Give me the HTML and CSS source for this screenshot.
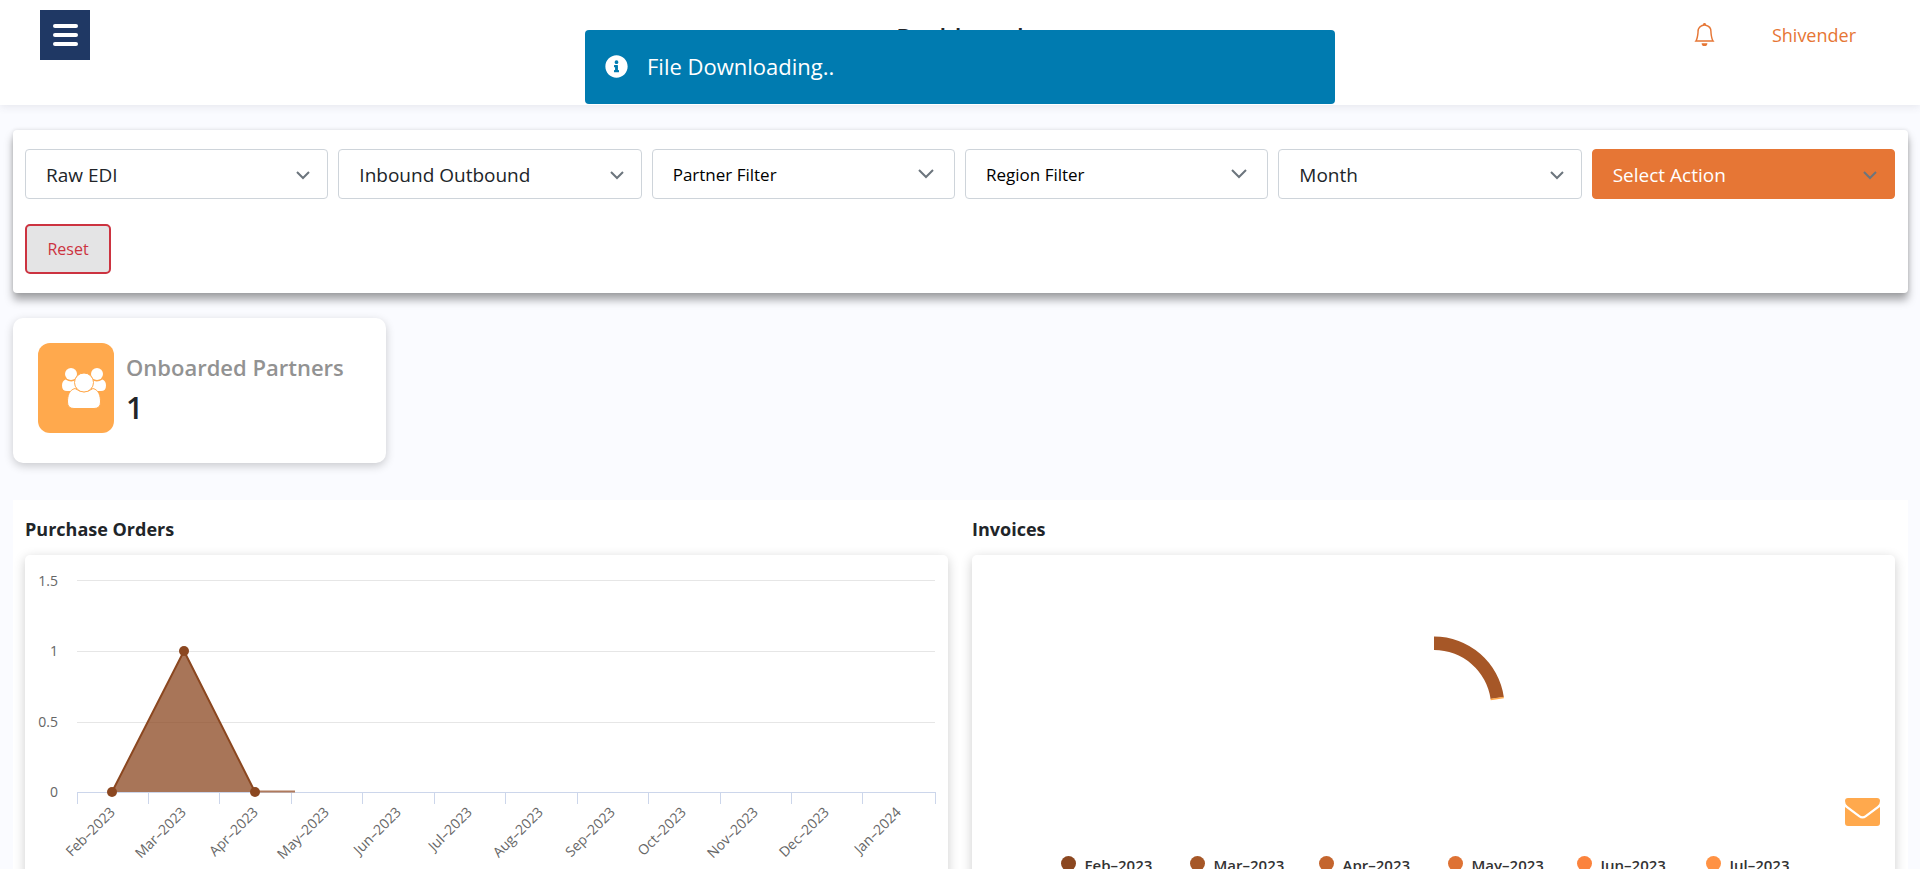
FILE: index.html
```html
<!DOCTYPE html>
<html lang="en">
<head>
<meta charset="utf-8">
<title>Dashboard</title>
<meta name="viewport" content="width=device-width, initial-scale=1">
<link rel="stylesheet" href="styles.css">
</head>
<body>
<header class="topbar">
  <button class="menu-btn" type="button" aria-label="Toggle menu"><span></span><span></span><span></span></button>
  <h1 class="topbar-title">Dashboard</h1>
  <div class="topbar-user">
    <button class="bell" type="button" aria-label="Notifications">
      <svg viewBox="0 0 16 16" width="23" height="23" fill="currentColor"><path d="M8 16a2 2 0 0 0 2-2H6a2 2 0 0 0 2 2zM8 1.918l-.797.161A4.002 4.002 0 0 0 4 6c0 .628-.134 2.197-.459 3.742-.16.767-.376 1.566-.663 2.258h10.244c-.287-.692-.502-1.49-.663-2.258C12.134 8.197 12 6.628 12 6a4.002 4.002 0 0 0-3.203-3.92L8 1.917zM14.22 12c.223.447.481.801.78 1H1c.299-.199.557-.553.78-1C2.68 10.2 3 6.88 3 6c0-2.42 1.72-4.44 4.005-4.901a1 1 0 1 1 1.99 0A5.002 5.002 0 0 1 13 6c0 .88.32 4.2 1.22 6z"/></svg>
    </button>
    <a class="user-link" href="#">Shivender</a>
  </div>
</header>

<div class="toast" role="status">
  <svg viewBox="0 0 512 512" width="23" height="23" fill="#fff" aria-hidden="true"><path d="M256 8C119 8 8 119 8 256s111 248 248 248 248-111 248-248S393 8 256 8zm0 110a42 42 0 1 1 0 84 42 42 0 0 1 0-84zm56 254c0 7-5 12-12 12h-88c-7 0-12-5-12-12v-24c0-7 5-12 12-12h12v-64h-12c-7 0-12-5-12-12v-24c0-7 5-12 12-12h64c7 0 12 5 12 12v100h12c7 0 12 5 12 12z"/></svg>
  <span>File Downloading..</span>
</div>

<main class="content">
  <form class="filters">
    <div class="field">
      <select aria-label="Document type"><option>Raw EDI</option></select>
      <svg class="caret" viewBox="0 0 16 16" aria-hidden="true"><path d="M2 5l6 6 6-6"/></svg>
    </div>
    <div class="field">
      <select aria-label="Direction"><option>Inbound Outbound</option></select>
      <svg class="caret" viewBox="0 0 16 16" aria-hidden="true"><path d="M2 5l6 6 6-6"/></svg>
    </div>
    <div class="field field-multi">
      <select aria-label="Partner"><option>Partner Filter</option></select>
      <svg class="caret" viewBox="0 0 16 16" aria-hidden="true"><path d="M1 4l7 7 7-7"/></svg>
    </div>
    <div class="field field-multi">
      <select aria-label="Region"><option>Region Filter</option></select>
      <svg class="caret" viewBox="0 0 16 16" aria-hidden="true"><path d="M1 4l7 7 7-7"/></svg>
    </div>
    <div class="field">
      <select aria-label="Period"><option>Month</option></select>
      <svg class="caret" viewBox="0 0 16 16" aria-hidden="true"><path d="M2 5l6 6 6-6"/></svg>
    </div>
    <div class="field field-action">
      <select aria-label="Action"><option>Select Action</option></select>
      <svg class="caret" viewBox="0 0 16 16" aria-hidden="true"><path d="M2 5l6 6 6-6"/></svg>
    </div>
    <button class="reset" type="button">Reset</button>
  </form>

  <section class="stat">
    <div class="stat-icon">
      <svg viewBox="0 0 44 42" width="44" height="42" fill="#fff" aria-hidden="true">
        <circle cx="9" cy="7" r="6"/><circle cx="35" cy="7" r="6"/>
        <path d="M3.500 12.500Q9 16 14 13L14 24H5Q0 24 0 18.500Q0 14 3.500 12.500Z"/>
        <path d="M40.500 12.500Q35 16 30 13L30 24H39Q44 24 44 18.500Q44 14 40.500 12.500Z"/>
        <g stroke="#ffa94d" stroke-width="1">
          <path d="M13 21.500Q22 28 31 21.500C37 23 38.500 29 38.500 35Q38.500 41.500 32 41.500H12Q5.500 41.500 5.500 35C5.500 29 7 23 13 21.500Z"/>
          <circle cx="22" cy="15.500" r="9.500"/>
        </g>
      </svg>
    </div>
    <div>
      <h2 class="stat-label">Onboarded Partners</h2>
      <p class="stat-value">1</p>
    </div>
  </section>

  <section class="charts">
    <article>
      <h3 class="chart-title">Purchase Orders</h3>
      <div class="panel">
        <svg class="chart" viewBox="0 0 923 400" role="img" aria-label="Purchase orders by month">
          <path class="grid" d="M52 25.500H910M52 96.500H910M52 167.500H910"/>
          <path class="axis" d="M52 237.500H911M52.500 238v11M123.500 238v11M194.500 238v11M266.500 238v11M337.500 238v11M409.500 238v11M480.500 238v11M552.500 238v11M623.500 238v11M695.500 238v11M766.500 238v11M837.500 238v11M910.500 238v11"/>
          <path class="area" d="M87 237L159 96L230 237Z"/>
          <path class="line" d="M87 237L159 96L230 237"/>
          <path class="line-thin" d="M230 236.500H270"/>
          <g fill="#8b4720"><circle cx="87" cy="237" r="5"/><circle cx="159" cy="96" r="5"/><circle cx="230" cy="237" r="5"/></g>
          <g class="labels" text-anchor="end">
            <text x="33" y="31">1.5</text><text x="33" y="101">1</text><text x="33" y="172">0.5</text><text x="33" y="242">0</text>
            <text transform="translate(91 258) rotate(-45)">Feb–2023</text>
            <text transform="translate(162 258) rotate(-45)">Mar–2023</text>
            <text transform="translate(234 258) rotate(-45)">Apr–2023</text>
            <text transform="translate(305 258) rotate(-45)">May–2023</text>
            <text transform="translate(377 258) rotate(-45)">Jun–2023</text>
            <text transform="translate(448 258) rotate(-45)">Jul–2023</text>
            <text transform="translate(519 258) rotate(-45)">Aug–2023</text>
            <text transform="translate(591 258) rotate(-45)">Sep–2023</text>
            <text transform="translate(662 258) rotate(-45)">Oct–2023</text>
            <text transform="translate(734 258) rotate(-45)">Nov–2023</text>
            <text transform="translate(805 258) rotate(-45)">Dec–2023</text>
            <text transform="translate(877 258) rotate(-45)">Jan–2024</text>
          </g>
        </svg>
      </div>
    </article>
    <article>
      <h3 class="chart-title">Invoices</h3>
      <div class="panel">
        <svg class="donut" viewBox="0 0 923 296" role="img" aria-label="Invoices by month">
          <path fill="#a65727" d="M462 81.500A70.500 70.500 0 0 1 531.800 142L518.600 144A57 57 0 0 0 462 95Z"/>
          <path stroke="#ffa94d" stroke-width="1.500" d="M531.800 142.400L518.600 144.400"/>
        </svg>
        <ul class="legend">
          <li><i class="dot dot-feb"></i>Feb–2023</li>
          <li><i class="dot dot-mar"></i>Mar–2023</li>
          <li><i class="dot dot-apr"></i>Apr–2023</li>
          <li><i class="dot dot-may"></i>May–2023</li>
          <li><i class="dot dot-jun"></i>Jun–2023</li>
          <li><i class="dot dot-jul"></i>Jul–2023</li>
        </ul>
      </div>
    </article>
  </section>
</main>

<button class="mail" type="button" aria-label="Contact us">
  <svg viewBox="0 0 35 28" width="35" height="28" fill="#ffa94d"><path d="M3 0H32Q35 0 35 3Q35 6 32.500 8L20.500 17Q17.500 19.500 14.500 17L2.500 8Q0 6 0 3Q0 0 3 0Z"/><path d="M0 9L13.500 19Q17.500 22 21.500 19L35 9V25Q35 28 32 28H3Q0 28 0 25Z"/></svg>
</button>
</body>
</html>
```
FILE: styles.css
```css
* { box-sizing: border-box; }

body {
  margin: 0;
  height: 100vh;
  overflow: hidden;
  background: #fafbff;
  color: #212529;
  font-family: "Segoe UI", "Open Sans", "Noto Sans", sans-serif;
  font-size: 18px;
  line-height: 24px;
}

h1, h2, h3, p, ul { margin: 0; padding: 0; }
button, select { font-family: inherit; cursor: pointer; }
svg { display: block; }

/* Top bar */
.topbar {
  display: grid;
  grid-template-columns: 1fr auto 1fr;
  align-items: start;
  height: 105px;
  padding: 10px 64px 0 40px;
  background: #fff;
  box-shadow: 0 2px 8px rgba(60, 60, 90, .1);
}
.menu-btn {
  display: flex;
  flex-direction: column;
  align-items: center;
  justify-content: center;
  gap: 5px;
  width: 50px;
  height: 50px;
  padding: 0;
  border: 0;
  background: #1f3864;
}
.menu-btn span { width: 25px; height: 4px; border-radius: 2px; background: #fff; }
.topbar-title { padding: 12px 0 0 24px; font-size: 24px; font-weight: 600; line-height: 30px; }
.topbar-user {
  display: flex;
  justify-content: flex-end;
  align-items: center;
  gap: 56px;
  height: 50px;
}
.bell { padding: 0 0 2px; border: 0; background: none; color: #e67635; }
.user-link { color: #e67635; font-size: 18px; text-decoration: none; }

.toast {
  position: fixed;
  top: 30px;
  left: 50%;
  z-index: 2;
  display: flex;
  align-items: center;
  gap: 19px;
  width: 750px;
  height: 74px;
  margin-left: -375px;
  padding: 0 20px 2px;
  border-radius: 4px;
  background: #007bb0;
  color: #fff;
  font-size: 22px;
}

.content { padding: 25px 12px 0 13px; }

/* Filters */
.filters {
  display: grid;
  grid-template-columns: repeat(6, 1fr);
  gap: 25px 10px;
  padding: 19px 13px 19px 12px;
  border-radius: 4px;
  background: #fff;
  box-shadow: 0 7px 8px rgba(0, 0, 0, .34), 0 0 4px rgba(0, 0, 0, .12);
}
.field { position: relative; }
.field select {
  appearance: none;
  display: block;
  width: 100%;
  height: 50px;
  padding: 1px 40px 0 20px;
  border: 1px solid #ced4da;
  border-radius: 4px;
  background: #fff;
  color: #212529;
  font-size: 19px;
}
.field-multi select { padding-top: 0; color: #000; font-size: 17px; }
.field-action select { border-color: #e67635; background: #e67635; color: #fff; }
.caret {
  position: absolute;
  top: 18px;
  right: 17px;
  width: 16px;
  height: 16px;
  fill: none;
  stroke: #6c757d;
  stroke-width: 2;
  pointer-events: none;
}
.field-multi .caret { top: 17px; right: 21px; }
.reset {
  justify-self: start;
  width: 86px;
  height: 50px;
  border: 2px solid #cc3340;
  border-radius: 5px;
  background: #e4e4e5;
  color: #cc3340;
  font-size: 16px;
}

/* Stat card */
.stat {
  display: flex;
  gap: 12px;
  width: 373px;
  height: 145px;
  margin-top: 25px;
  padding: 25px;
  border-radius: 10px;
  background: #fff;
  box-shadow: 0 3px 10px rgba(0, 0, 0, .2);
}
.stat-icon {
  display: flex;
  align-items: center;
  justify-content: flex-end;
  width: 76px;
  height: 90px;
  padding-right: 8px;
  border-radius: 12px;
  background: #ffa94d;
}
.stat-label { padding-top: 9px; color: #929292; font-size: 22px; font-weight: 600; line-height: 30px; white-space: nowrap; }
.stat-value { padding-top: 8px; font-size: 30px; font-weight: 600; line-height: 36px; }

/* Charts */
.charts {
  display: grid;
  grid-template-columns: 1fr 1fr;
  gap: 24px;
  margin-top: 37px;
  padding: 16px 13px 24px 12px;
  background: #fff;
}
.chart-title { font-size: 18px; font-weight: 700; line-height: 26px; }
.panel {
  height: 400px;
  margin-top: 13px;
  border-radius: 5px;
  background: #fff;
  box-shadow: 0 3px 12px rgba(0, 0, 0, .2);
}
.chart, .donut { width: 100%; }
.grid { fill: none; stroke: #e6e6e6; }
.axis { fill: none; stroke: #ccd6eb; }
.area { fill: #8b4720; fill-opacity: .75; }
.line { fill: none; stroke: #8b4720; stroke-width: 2; }
.line-thin { fill: none; stroke: #b07a5c; stroke-width: 2; }
.labels { fill: #666; font-size: 14px; }

.legend {
  display: grid;
  grid-template-columns: repeat(6, 129px);
  justify-content: center;
  padding-top: 2px;
  padding-left: 28px;
  list-style: none;
  color: #333;
  font-size: 15px;
  font-weight: 600;
}
.legend li { display: flex; align-items: center; gap: 9px; }
.dot { width: 15px; height: 15px; margin-bottom: 3px; border-radius: 50%; }
.dot-feb { background: #8b4720; }
.dot-mar { background: #a65727; }
.dot-apr { background: #c4652e; }
.dot-may { background: #de7234; }
.dot-jun { background: #fb833d; }
.dot-jul { background: #ff9244; }

.mail {
  position: fixed;
  right: 40px;
  bottom: 43px;
  padding: 0;
  border: 0;
  background: none;
}
```
